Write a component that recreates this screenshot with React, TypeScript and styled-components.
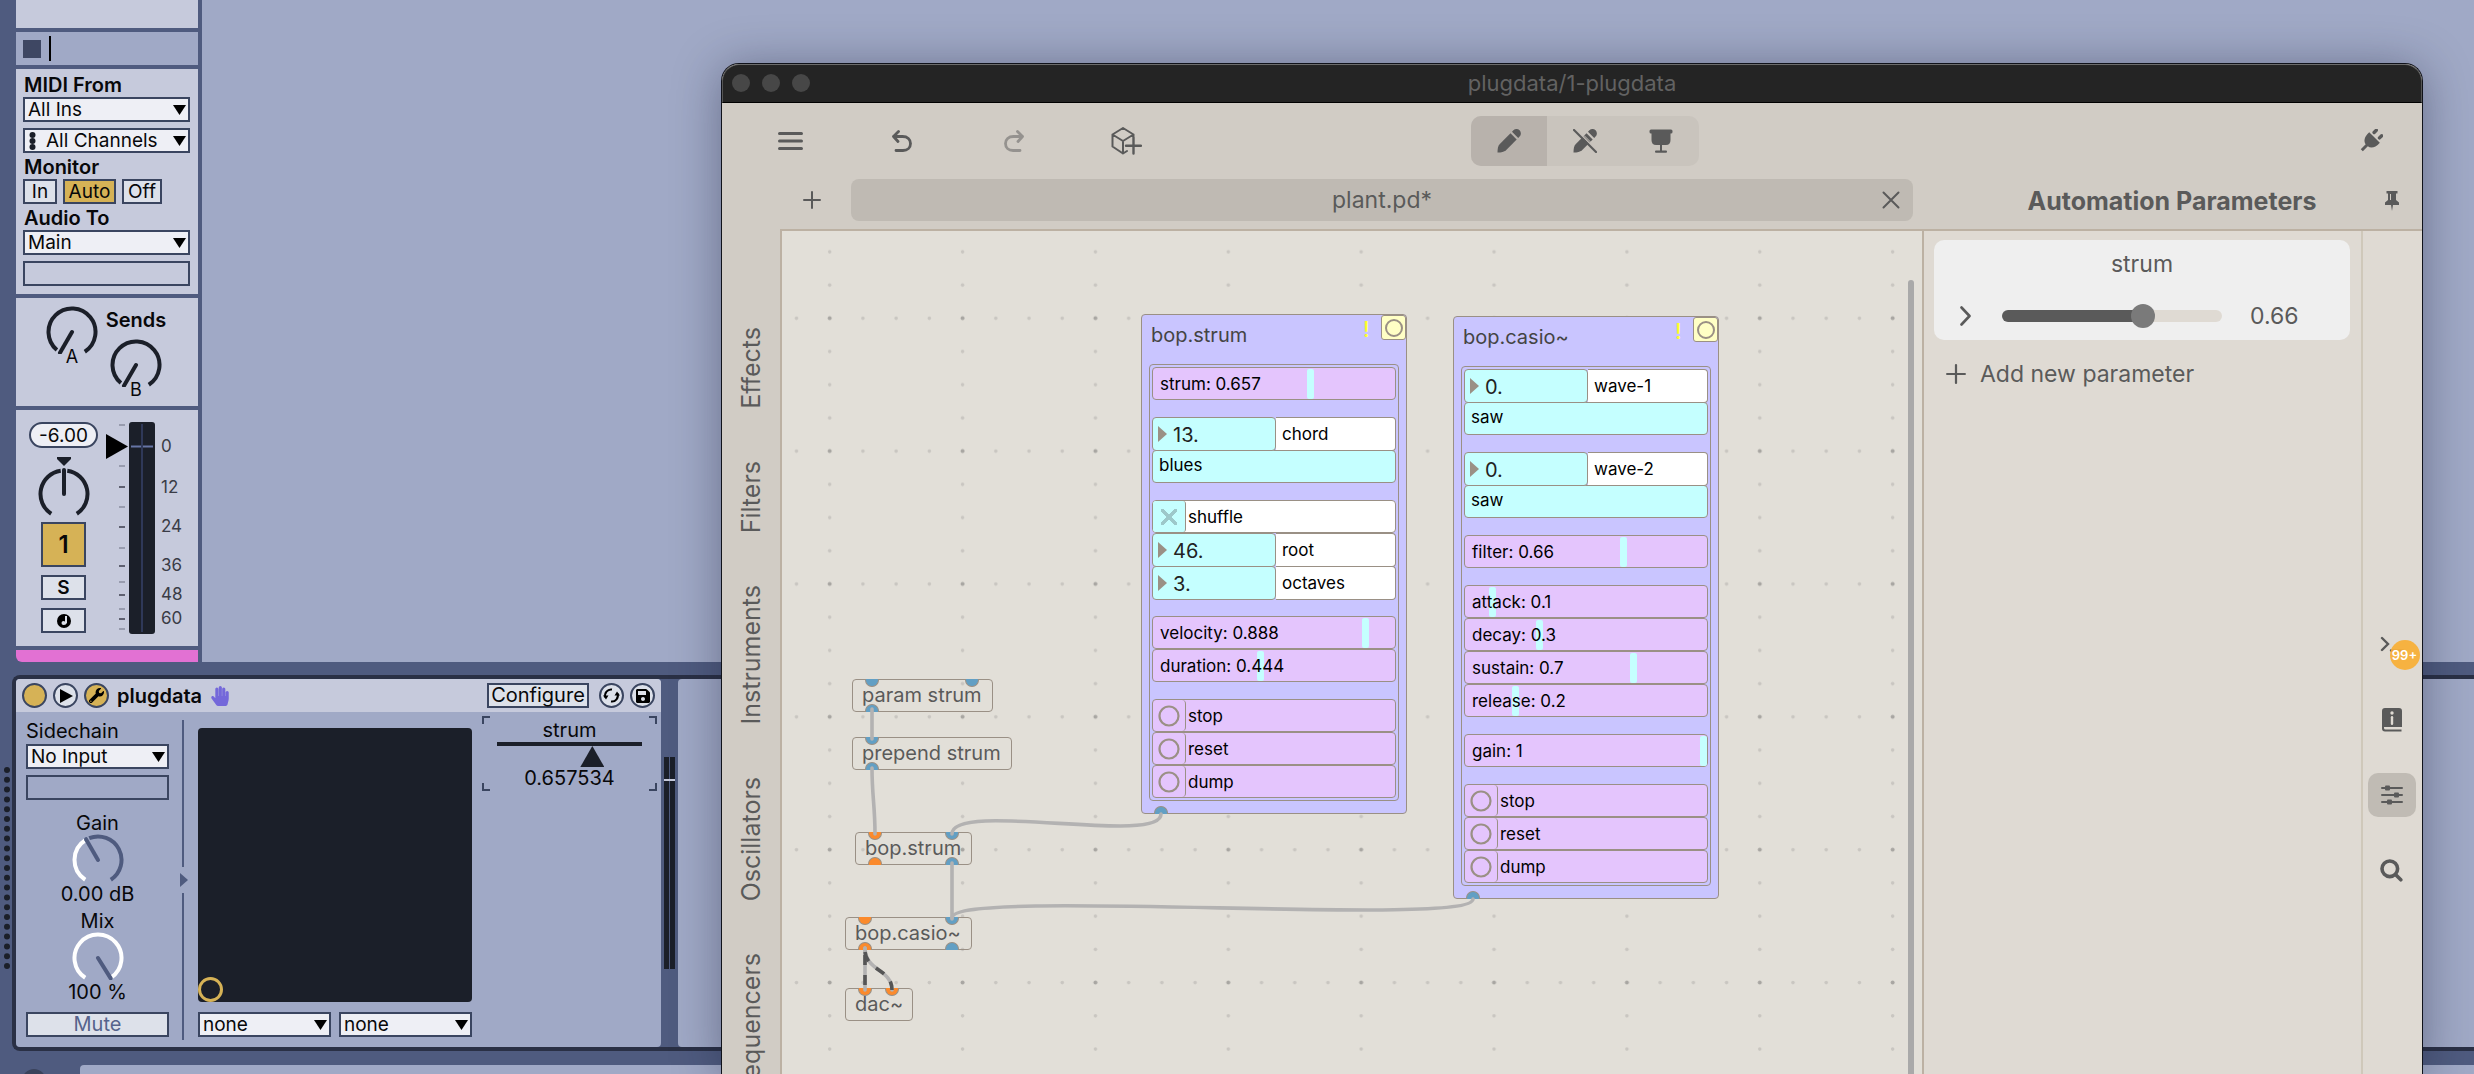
import React, { useId, useState } from "react";
import styled, { createGlobalStyle, css } from "styled-components";
import { FaHandPaper, FaSave, FaWrench } from "react-icons/fa";

const c = {
  frame: "#4f5b7f",
  lilac: "#a0a9c6",
  pale: "#c6cadc",
  field: "#eeeff5",
  control: "#dde1ea",
  line: "#3a4560",
  rackLine: "#2a3045",
  ink: "#1b1f29",
  gold: "#d6b256",
  pink: "#e271d3",
  bar: "#d1ccc5",
  panel: "#dfdad3",
  canvas: "#e2dfd8",
  rule: "#bcb1a3",
  text: "#5a5a5a",
  outline: "#9a9085",
  cyan: "#c5ffff",
  violet: "#e4c5fd",
  patch: "#c9c5ff",
};

const Global = createGlobalStyle`
  *, *::before, *::after { box-sizing: border-box; }
  body { margin: 0; font-family: Inter, "Liberation Sans", sans-serif; overflow: hidden; }
  button, input, select { font: inherit; color: inherit; margin: 0; padding: 0; border-radius: 0; }
  button { cursor: pointer; }
`;

const Page = styled.div`
  position: relative;
  display: flex;
  flex-direction: column;
  height: 100vh;
  overflow: hidden;
  background: ${c.frame};
  color: #08080a;
  font-size: 20px;
  line-height: 24px;
`;

/* ---------- shared Live controls ---------- */

const SelectWrap = styled.div`
  position: relative;
  display: flex;
  svg { position: absolute; right: 4px; top: 8px; pointer-events: none; }
`;
const SelectBox = styled.select<{ $indent?: boolean }>`
  appearance: none;
  width: 100%;
  height: 25px;
  padding: 0 20px 0 ${(p) => (p.$indent ? 21 : 3)}px;
  border: 2px solid ${c.line};
  background: ${c.field};
  font-size: 19px;
  line-height: 21px;
`;
const ChannelDots = styled.span`
  position: absolute;
  left: 6px;
  top: 4px;
  display: flex;
  svg { position: static; }
`;

function Select({ label, value, dots }: { label: string; value: string; dots?: boolean }) {
  return (
    <SelectWrap>
      <SelectBox aria-label={label} $indent={dots}>
        <option>{value}</option>
      </SelectBox>
      {dots && (
        <ChannelDots>
          <svg width="7" height="18" viewBox="0 0 7 18" fill={c.ink}>
            <circle cx="3.5" cy="3" r="3" />
            <circle cx="3.5" cy="9" r="3" />
            <circle cx="3.5" cy="15" r="3" />
          </svg>
        </ChannelDots>
      )}
      <svg width="13" height="10" viewBox="0 0 13 10">
        <path d="M0 0H13L6.5 10Z" />
      </svg>
    </SelectWrap>
  );
}

const EmptyBox = styled.div`
  height: 25px;
  margin-top: 6px;
  border: 2px solid ${c.line};
`;

const PushButton = styled.button<{ $w?: number; $on?: boolean; $h?: number; $bold?: boolean; $size?: number }>`
  display: flex;
  align-items: center;
  justify-content: center;
  width: ${(p) => (p.$w ? p.$w + "px" : "auto")};
  height: ${(p) => p.$h ?? 25}px;
  border: 2px solid ${c.line};
  background: ${(p) => (p.$on ? c.gold : c.control)};
  font-size: ${(p) => p.$size ?? 19}px;
  font-weight: ${(p) => (p.$bold ? 600 : 400)};
  line-height: 21px;
`;

function polar(cx: number, cy: number, r: number, deg: number) {
  const a = ((deg - 90) * Math.PI) / 180;
  return `${(cx + r * Math.cos(a)).toFixed(2)} ${(cy + r * Math.sin(a)).toFixed(2)}`;
}
function arc(from: number, to: number) {
  return `M${polar(26, 26, 23.5, from)}A23.5 23.5 0 ${to - from > 180 ? 1 : 0} 1 ${polar(26, 26, 23.5, to)}`;
}

function Knob({ angle, ring, filled, pointer }: { angle: number; ring: string; filled?: string; pointer: string }) {
  return (
    <svg width="52" height="48" viewBox="0 0 52 48" fill="none" strokeWidth="4">
      {angle < 145 && <path d={arc(Math.max(angle + 8, -140), 147)} stroke={ring} />}
      {angle > -147 && <path d={arc(-147, angle - (filled ? 2 : 8))} stroke={filled ?? ring} />}
      <path d={`M26 26L${polar(26, 26, 24, angle)}`} stroke={pointer} strokeLinecap="round" />
    </svg>
  );
}

/* ---------- session track ---------- */

const Session = styled.div`
  display: flex;
  flex: none;
  gap: 4px;
  padding-left: 16px;
`;
const Track = styled.div`
  display: flex;
  flex-direction: column;
  flex: none;
  gap: 4px;
  width: 182px;
`;
const Block = styled.section`
  background: ${c.pale};
`;
const EmptySlots = styled(Block)`
  height: 28px;
`;
const StopRow = styled.div`
  display: flex;
  align-items: center;
  gap: 8px;
  height: 33px;
  padding-left: 7px;
  background: ${c.lilac};
`;
const StopSquare = styled.button`
  width: 18px;
  height: 18px;
  border: 0;
  background: #3e4763;
`;
const Caret = styled.span`
  width: 2px;
  height: 25px;
  background: #000;
`;
const Routing = styled(Block)`
  padding: 2px 8px 8px 7px;
`;
const RoutingLabel = styled.div`
  height: 26px;
  padding-left: 1px;
  font-weight: 600;
  line-height: 28px;
`;
const Gap = styled.div`
  height: 6px;
`;
const Monitor = styled.div`
  display: flex;
  gap: 6px;
`;
const Arrangement = styled.div`
  flex: 1;
  background: ${c.lilac};
`;
const Sends = styled(Block)`
  display: flex;
  height: 108px;
  padding: 8px 0 0 30px;
`;
const SendKnob = styled.div`
  display: flex;
  flex-direction: column;
  align-items: center;
  width: 52px;
  font-size: 18px;
  line-height: 20px;
  svg { margin-bottom: -7px; }
`;
const SendB = styled.div`
  display: flex;
  flex-direction: column;
  align-items: center;
  width: 76px;
  font-weight: 600;
  ${SendKnob} { font-weight: 400; margin-top: 9px; }
`;
const SendTitle = styled.span`
  height: 24px;
  line-height: 28px;
`;
const Mixer = styled(Block)`
  display: flex;
  height: 236px;
  padding: 12px 0 0 13px;
`;
const Strip = styled.div`
  display: flex;
  flex-direction: column;
  align-items: center;
  width: 69px;
`;
const Volume = styled.input`
  width: 69px;
  height: 26px;
  border: 2px solid ${c.line};
  border-radius: 13px;
  background: ${c.field};
  font-size: 19px;
  text-align: center;
`;
const PanMark = styled.svg`
  margin: 9px 0 2px;
`;
const StripButtons = styled.div`
  display: flex;
  flex-direction: column;
  gap: 8px;
  margin-top: 6px;
`;
const TrackColor = styled.div`
  height: 12px;
  border-bottom-left-radius: 6px;
  background: ${c.pink};
`;

const ticks: [number, boolean][] = [
  [3, false], [44, false], [65, true], [85, false], [105, true], [126, false],
  [144, true], [160, false], [173, true], [187, false], [197, true], [207, false],
];
const scale: [number, string][] = [
  [24, "0"], [65, "12"], [104, "24"], [143, "36"], [172, "48"], [196, "60"],
];

const Meter = styled.svg`
  margin-left: 8px;
  font-size: 17px;
`;

function LevelMeter() {
  return (
    <Meter width="80" height="212" viewBox="0 0 80 212">
      {ticks.map(([y, strong]) => (
        <rect key={y} x="13" y={y - 1} width="6" height="2" fill={strong ? "#5e6070" : "#989cae"} />
      ))}
      <path d="M0 12L22 24.5L0 37Z" fill="#000" />
      <rect x="23" width="26" height="212" rx="3" fill={c.ink} />
      <path d="M36 2V210" stroke="#2f3858" strokeWidth="2" />
      <path d="M25 24.500H35M37 24.500H47" stroke="#6675a5" strokeWidth="2" />
      {scale.map(([y, t]) => (
        <text key={t} x="55" y={y + 6} fill="#3a3c46">{t}</text>
      ))}
    </Meter>
  );
}

function TrackColumn() {
  return (
    <Track>
      <EmptySlots />
      <StopRow>
        <StopSquare aria-label="Stop clips" />
        <Caret />
      </StopRow>
      <Routing>
        <RoutingLabel>MIDI From</RoutingLabel>
        <Select label="MIDI From" value="All Ins" />
        <Gap />
        <Select label="MIDI channel" value="All Channels" dots />
        <RoutingLabel>Monitor</RoutingLabel>
        <Monitor>
          <PushButton $w={34}>In</PushButton>
          <PushButton $w={53} $on>Auto</PushButton>
          <PushButton $w={40}>Off</PushButton>
        </Monitor>
        <RoutingLabel>Audio To</RoutingLabel>
        <Select label="Audio To" value="Main" />
        <EmptyBox />
      </Routing>
      <Sends>
        <SendKnob>
          <Knob angle={-150} ring={c.ink} pointer={c.ink} />
          A
        </SendKnob>
        <SendB>
          <SendTitle>Sends</SendTitle>
          <SendKnob>
            <Knob angle={-150} ring={c.ink} pointer={c.ink} />
            B
          </SendKnob>
        </SendB>
      </Sends>
      <Mixer>
        <Strip>
          <Volume aria-label="Track volume" defaultValue="-6.00" />
          <PanMark width="14" height="9" viewBox="0 0 14 9" fill={c.ink}>
            <path d="M0 0H14V2L7 9L0 2Z" />
          </PanMark>
          <Knob angle={0} ring={c.ink} pointer={c.ink} />
          <StripButtons>
            <PushButton $w={45} $h={45} $size={24} $on $bold>1</PushButton>
            <PushButton $w={45} $h={25} $bold>S</PushButton>
            <PushButton $w={45} $h={25} aria-label="Arm recording">
              <svg width="14" height="14" viewBox="0 0 14 14">
                <circle cx="7" cy="7" r="7" />
                <path d="M9 2V9.500M9 9.500H6.500" stroke={c.control} strokeWidth="2" fill="none" />
                <circle cx="6.500" cy="9" r="2" fill={c.control} />
              </svg>
            </PushButton>
          </StripButtons>
        </Strip>
        <LevelMeter />
      </Mixer>
      <TrackColor />
    </Track>
  );
}

/* ---------- device rack ---------- */

const RackRow = styled.div`
  display: flex;
  flex: none;
  margin-top: 13px;
`;
const Grip = styled.svg`
  flex: none;
  margin-top: 92px;
`;
const Rack = styled.div`
  display: flex;
  flex: 1;
  border: 4px solid ${c.rackLine};
  border-right: 0;
  border-radius: 8px 0 0 8px;
`;
const Device = styled.section`
  flex: none;
  width: 645px;
  height: 368px;
  border-radius: 4px;
  overflow: hidden;
  background: ${c.lilac};
`;
const DeviceHeader = styled.header`
  display: flex;
  align-items: center;
  gap: 6px;
  height: 33px;
  padding: 0 6px;
  background: ${c.pale};
  font-weight: 600;
`;
const RoundButton = styled.button<{ $on?: boolean }>`
  display: flex;
  align-items: center;
  justify-content: center;
  width: 25px;
  height: 25px;
  border: 2px solid ${c.line};
  border-radius: 50%;
  background: ${(p) => (p.$on ? c.gold : c.control)};
`;
const DeviceName = styled.span`
  display: flex;
  flex: 1;
  align-items: center;
  gap: 8px;
  padding-left: 2px;
`;
const HeaderRight = styled.div`
  display: flex;
  gap: 6px;
  ${PushButton} { margin-right: 4px; }
`;
const DeviceBody = styled.div`
  display: flex;
  padding-left: 10px;
`;
const SideControls = styled.div`
  width: 143px;
  padding-top: 7px;
`;
const SideLabel = styled.div`
  height: 25px;
`;
const KnobGroup = styled.div<{ $top: number }>`
  display: flex;
  flex-direction: column;
  align-items: center;
  margin-top: ${(p) => p.$top}px;
`;
const KnobLabel = styled.span`
  height: 22px;
  line-height: 22px;
`;
const MuteButton = styled(PushButton)`
  width: 100%;
  margin-top: 8px;
  color: #56638c;
`;
const Divider = styled.svg`
  flex: none;
  margin: 8px 8px 0 11px;
`;
const PadColumn = styled.div`
  width: 274px;
  padding-top: 16px;
`;
const XYPad = styled.div`
  display: flex;
  align-items: flex-end;
  height: 274px;
  border-radius: 4px;
  background: ${c.ink};
`;
const PadHandle = styled.button`
  width: 25px;
  height: 25px;
  border: 3px solid ${c.gold};
  border-radius: 50%;
  background: none;
`;
const PadSelects = styled.div`
  display: grid;
  grid-template-columns: 1fr 1fr;
  gap: 8px;
  margin-top: 10px;
`;
const Param = styled.label`
  position: relative;
  display: flex;
  flex-direction: column;
  align-items: center;
  width: 175px;
  height: 75px;
  margin: 4px 0 0 10px;
  padding-top: 2px;
`;
const Corners = styled.svg`
  position: absolute;
  inset: 0;
`;
const ParamTrack = styled.div`
  display: flex;
  justify-content: center;
  width: 145px;
  height: 24px;
  border-top: 4px solid ${c.ink};
`;
const ParamRange = styled.input`
  appearance: none;
  flex: none;
  width: 169px;
  height: 21px;
  background: none;
  &::-webkit-slider-thumb {
    appearance: none;
    width: 24px;
    height: 21px;
    background: ${c.ink};
    clip-path: polygon(50% 0, 100% 100%, 0 100%);
  }
`;
const RackMeters = styled.svg`
  flex: none;
  margin: 78px 3px 0;
`;
const NextDevice = styled.div`
  flex: 1;
  border-radius: 4px 0 0 4px;
  background: ${c.lilac};
`;
const Footer = styled.div`
  display: flex;
  flex: 1;
  gap: 34px;
  margin-top: 14px;
  padding-left: 22px;
`;
const FooterButton = styled.button`
  flex: none;
  width: 24px;
  height: 24px;
  margin-top: 4px;
  border: 0;
  border-radius: 50%;
  background: #3a435c;
`;
const FooterPanel = styled.div`
  flex: 1;
  border-top-left-radius: 4px;
  background: ${c.lilac};
`;

function DeviceRack() {
  return (
    <RackRow>
      <Grip width="12" height="204" viewBox="0 0 12 204" fill={c.ink}>
        {Array.from({ length: 21 }, (_, i) => (
          <circle key={i} cx="7" cy={3 + i * 9.8} r="3" />
        ))}
      </Grip>
      <Rack>
        <Device>
          <DeviceHeader>
            <RoundButton $on aria-label="Device on" />
            <RoundButton aria-label="Preview">
              <svg width="14" height="16" viewBox="0 0 14 16"><path d="M1 1L14 8L1 15Z" /></svg>
            </RoundButton>
            <RoundButton $on aria-label="Show plug-in window">
              <FaWrench size={15} color="#000" />
            </RoundButton>
            <DeviceName>
              plugdata
              <FaHandPaper size={20} color="#7468da" />
            </DeviceName>
            <HeaderRight>
              <PushButton $w={102} $size={20}>Configure</PushButton>
              <RoundButton aria-label="Hot-swap">
                <svg width="17" height="17" viewBox="0 0 17 17" fill="none" stroke="#000" strokeWidth="2">
                  <path d="M2.500 10.500A6 6 0 0 1 9 2.500M14.500 6.500A6 6 0 0 1 8 14.500" />
                  <path d="M0 8.500H5.500L3 12.500ZM17 8.500H11.500L14 4.500Z" fill="#000" stroke="none" />
                </svg>
              </RoundButton>
              <RoundButton aria-label="Save preset">
                <FaSave size={16} color="#000" />
              </RoundButton>
            </HeaderRight>
          </DeviceHeader>
          <DeviceBody>
            <SideControls>
              <SideLabel>Sidechain</SideLabel>
              <Select label="Sidechain" value="No Input" />
              <EmptyBox />
              <KnobGroup $top={12}>
                <KnobLabel>Gain</KnobLabel>
                <Knob angle={-30} ring={c.frame} filled="#fff" pointer={c.frame} />
                0.00 dB
              </KnobGroup>
              <KnobGroup $top={4}>
                <KnobLabel>Mix</KnobLabel>
                <Knob angle={148} ring={c.frame} filled="#fff" pointer={c.frame} />
                100 %
              </KnobGroup>
              <MuteButton $size={20}>Mute</MuteButton>
            </SideControls>
            <Divider width="10" height="320" viewBox="0 0 10 320" fill={c.frame}>
              <rect x="2" width="2" height="147" />
              <path d="M0 153L8 160L0 167Z" />
              <rect x="2" y="173" width="2" height="147" />
            </Divider>
            <PadColumn>
              <XYPad>
                <PadHandle aria-label="X-Y handle" />
              </XYPad>
              <PadSelects>
                <Select label="X axis" value="none" />
                <Select label="Y axis" value="none" />
              </PadSelects>
            </PadColumn>
            <Param>
              <Corners width="175" height="75" viewBox="0 0 175 75" fill="none" stroke={c.line} strokeWidth="2">
                <path d="M8 1H1V8M167 1H174V8M8 74H1V67M167 74H174V67" />
              </Corners>
              strum
              <ParamTrack>
                <ParamRange type="range" min="0" max="1" step="any" defaultValue="0.657534" />
              </ParamTrack>
              0.657534
            </Param>
          </DeviceBody>
        </Device>
        <RackMeters width="11" height="212" viewBox="0 0 11 212">
          <rect width="5" height="212" fill={c.ink} />
          <rect x="6" width="5" height="212" fill={c.ink} />
          <rect y="22" width="11" height="2" fill={c.pale} />
        </RackMeters>
        <NextDevice />
      </Rack>
    </RackRow>
  );
}

/* ---------- plugdata window ---------- */

const Window = styled.div`
  position: absolute;
  left: 721px;
  right: 51px;
  top: 63px;
  bottom: 0;
  display: flex;
  flex-direction: column;
  overflow: hidden;
  border: 1px solid #10121a;
  border-bottom: 0;
  border-radius: 18px 18px 0 0;
  background: ${c.bar};
  box-shadow: 0 4px 48px rgba(20, 26, 50, 0.4);
  color: ${c.text};
  font-size: 23px;
  line-height: 28px;
  button { border: 0; background: none; }
`;
const TitleBar = styled.header`
  display: grid;
  grid-template-columns: 1fr auto 1fr;
  align-items: center;
  flex: none;
  height: 39px;
  padding: 0 9px 2px;
  border: 1px solid;
  border-color: #6c6c6c #555 #000;
  border-radius: 17px 17px 0 0;
  background: #242424;
  color: #626262;
  font-size: 22px;
`;
const Lights = styled.div`
  display: flex;
  gap: 12px;
`;
const Light = styled.button`
  && {
    width: 18px;
    height: 18px;
    border-radius: 50%;
    background: #474747;
  }
`;
const Toolbar = styled.div`
  display: grid;
  grid-template-columns: 1fr auto 1fr;
  align-items: center;
  flex: none;
  height: 76px;
  padding-left: 26px;
`;
const ToolGroup = styled.div`
  display: flex;
  gap: 28px;
`;
const ToolButton = styled.button<{ $dim?: boolean }>`
  display: flex;
  align-items: center;
  justify-content: center;
  width: 84px;
  height: 48px;
  opacity: ${(p) => (p.$dim ? 0.5 : 1)};
`;
const Modes = styled.div`
  display: flex;
  overflow: hidden;
  border-radius: 10px;
  background: #c9c4bd;
`;
const ModeButton = styled.button<{ $on?: boolean }>`
  && {
    display: flex;
    align-items: center;
    justify-content: center;
    width: 76px;
    height: 50px;
    background: ${(p) => (p.$on ? "#b8b2ac" : "transparent")};
  }
`;
const PlugSlot = styled.div`
  display: flex;
  justify-content: flex-end;
  padding-right: 9px;
`;
const TabRow = styled.div`
  display: grid;
  grid-template-columns: 1fr 500px;
  flex: none;
  height: 50px;
`;
const Tabs = styled.div`
  display: flex;
  align-items: flex-start;
  gap: 14px;
  padding: 0 9px 0 65px;
`;
const AddTab = styled.button`
  display: flex;
  align-items: center;
  justify-content: center;
  width: 50px;
  height: 42px;
`;
const Tab = styled.div`
  display: grid;
  grid-template-columns: 44px 1fr 44px;
  align-items: center;
  flex: 1;
  height: 42px;
  border-radius: 8px;
  background: #bfbab3;
  text-align: center;
`;
const CloseTab = styled.button`
  display: flex;
  align-items: center;
  justify-content: center;
  height: 42px;
`;
const PanelTitle = styled.div`
  display: grid;
  grid-template-columns: 60px 1fr 60px;
  align-items: center;
  height: 44px;
  text-align: center;
`;
const PanelHeading = styled.h2`
  margin: 0;
  font-size: 25px;
  font-weight: 700;
`;
const Main = styled.div`
  display: flex;
  flex: 1;
  min-height: 0;
`;
const Palette = styled.nav`
  display: flex;
  flex-direction: column;
  align-items: center;
  flex: none;
  gap: 52px;
  width: 58px;
  padding: 98px 0 0;
`;
const PaletteItem = styled.button`
  writing-mode: vertical-rl;
  transform: rotate(180deg);
  font-size: 25px;
  line-height: 28px;
`;
const CanvasArea = styled.main`
  position: relative;
  flex: 1;
  overflow: hidden;
  border-top: 2px solid ${c.rule};
  border-left: 2px solid ${c.rule};
  background: ${c.canvas};
`;
const Layer = styled.svg`
  position: absolute;
  inset: 0;
  width: 100%;
  height: 100%;
  pointer-events: none;
`;
const Scrollbar = styled.div`
  position: absolute;
  right: 8px;
  top: 49px;
  bottom: 0;
  width: 6px;
  border-radius: 3px 3px 0 0;
  background: #a9a9a9;
`;
const ObjectBox = styled.div<{ $x: number; $y: number; $w: number }>`
  position: absolute;
  left: ${(p) => p.$x}px;
  top: ${(p) => p.$y}px;
  width: ${(p) => p.$w}px;
  height: 33px;
  padding-left: 9px;
  border: 1px solid ${c.outline};
  border-radius: 4px;
  font-size: 20px;
  line-height: 31px;
  white-space: nowrap;
`;
const Port = styled.i<{ $x: number; $out?: boolean; $signal?: boolean }>`
  position: absolute;
  left: ${(p) => p.$x - 8}px;
  ${(p) => (p.$out ? "bottom" : "top")}: -1px;
  width: 14px;
  height: 8px;
  border: 1px solid ${c.outline};
  ${(p) =>
    p.$out
      ? css`border-bottom: 0; border-radius: 7px 7px 0 0;`
      : css`border-top: 0; border-radius: 0 0 7px 7px;`}
  background: ${(p) => (p.$signal ? "#fb8a2c" : "#629fc4")};
`;

const Patch = styled.section<{ $x: number; $y: number }>`
  position: absolute;
  left: ${(p) => p.$x}px;
  top: ${(p) => p.$y}px;
  width: 266px;
  padding: 0 7px 12px;
  border: 1px solid ${c.outline};
  border-radius: 4px;
  background: ${c.patch};
  color: #000;
  font-size: 17px;
  line-height: 20px;
`;
const PatchHead = styled.header`
  display: flex;
  height: 49px;
  margin-right: -7px;
  padding-left: 2px;
  color: #444;
  font-size: 20px;
`;
const PatchTitle = styled.span`
  flex: 1;
  padding-top: 10px;
`;
const Warn = styled.span`
  width: 18px;
  padding-top: 4px;
  color: #ffff2e;
  font-size: 22px;
  font-weight: 500;
`;
const HelpBang = styled.button`
  && {
    display: flex;
    align-items: center;
    justify-content: center;
    width: 25px;
    height: 25px;
    border: 1px solid ${c.outline};
    border-radius: 3px;
    background: #ffffc5;
  }
`;
const Frame = styled.div`
  display: flex;
  flex-direction: column;
  gap: 17px;
  padding: 2px;
  border: 1px solid ${c.outline};
  border-radius: 4px;
`;
const rowBase = css`
  height: 33px;
  border: 1px solid ${c.outline};
  border-radius: 4px;
`;
const SliderRow = styled.label`
  ${rowBase}
  display: grid;
  align-items: center;
  background: ${c.violet};
`;
const SliderText = styled.span`
  grid-area: 1 / 1;
  z-index: 1;
  padding-left: 7px;
  pointer-events: none;
`;
const SliderInput = styled.input`
  grid-area: 1 / 1;
  appearance: none;
  width: 100%;
  height: 31px;
  background: none;
  &::-webkit-slider-thumb {
    appearance: none;
    width: 7px;
    height: 30px;
    border-radius: 2px;
    background: ${c.cyan};
  }
`;
const NumberRow = styled.label`
  display: grid;
  grid-template-columns: 124px 1fr;
  height: 33px;
`;
const NumberCell = styled.span`
  display: flex;
  align-items: center;
  gap: 6px;
  min-width: 0;
  padding-left: 5px;
  border: 1px solid ${c.outline};
  border-radius: 4px;
  background: ${c.cyan};
`;
const NumberInput = styled.input`
  width: 90px;
  height: 31px;
  padding-top: 1px;
  border: 0;
  background: none;
  color: #222;
  font-size: 20px;
`;
const NameCell = styled.span`
  padding-left: 6px;
  border: 1px solid ${c.outline};
  border-left: 0;
  border-radius: 0 4px 4px 0;
  background: #fff;
  line-height: 32px;
`;
const ValueRow = styled.output`
  ${rowBase}
  display: block;
  padding-left: 6px;
  background: ${c.cyan};
  line-height: 29px;
`;
const PushRow = styled.label<{ $bg: string }>`
  ${rowBase}
  display: flex;
  align-items: center;
  gap: 2px;
  background: ${(p) => p.$bg};
`;
const BangButton = styled.button`
  && {
    display: flex;
    align-items: center;
    justify-content: center;
    width: 33px;
    height: 31px;
    border-right: 1px solid ${c.outline};
    border-radius: 0 4px 4px 0;
  }
`;
const ToggleInput = styled.input`
  appearance: none;
  width: 33px;
  height: 31px;
  border-right: 1px solid ${c.outline};
  border-radius: 3px;
  background:
    linear-gradient(45deg, transparent 43%, #9dc8ca 43%, #9dc8ca 57%, transparent 57%) center / 16px 16px no-repeat,
    linear-gradient(-45deg, transparent 43%, #9dc8ca 43%, #9dc8ca 57%, transparent 57%) center / 16px 16px no-repeat,
    ${c.cyan};
`;
const Stack = styled.div``;

function ParamSlider({ name, value }: { name: string; value: number }) {
  const [v, setV] = useState(value);
  return (
    <SliderRow>
      <SliderText>{`${name}: ${v}`}</SliderText>
      <SliderInput type="range" min="0" max="1" step="0.001" value={v} onChange={(e) => setV(Number(e.target.value))} />
    </SliderRow>
  );
}
function NumberBox({ name, value }: { name: string; value: string }) {
  return (
    <NumberRow>
      <NumberCell>
        <svg width="9" height="16" viewBox="0 0 9 16" fill={c.outline}><path d="M0 0L9 8L0 16Z" /></svg>
        <NumberInput defaultValue={value} />
      </NumberCell>
      <NameCell>{name}</NameCell>
    </NumberRow>
  );
}
function Bang({ name }: { name: string }) {
  const id = useId();
  return (
    <PushRow $bg={c.violet} htmlFor={id}>
      <BangButton id={id}>
        <svg width="22" height="22" viewBox="0 0 22 22" fill="none" stroke={c.outline} strokeWidth="2.200">
          <circle cx="11" cy="11" r="9.500" />
        </svg>
      </BangButton>
      {name}
    </PushRow>
  );
}
function Bangs() {
  return (
    <Stack>
      <Bang name="stop" />
      <Bang name="reset" />
      <Bang name="dump" />
    </Stack>
  );
}
function PatchModule({ title, x, y, children }: { title: string; x: number; y: number; children: React.ReactNode }) {
  return (
    <Patch $x={x} $y={y}>
      <PatchHead>
        <PatchTitle>{title}</PatchTitle>
        <Warn>!</Warn>
        <HelpBang aria-label={`${title} help`}>
          <svg width="18" height="18" viewBox="0 0 18 18" fill="none" stroke={c.outline} strokeWidth="2">
            <circle cx="9" cy="9" r="8" />
          </svg>
        </HelpBang>
      </PatchHead>
      <Frame>{children}</Frame>
      <Port $x={20} $out />
    </Patch>
  );
}

type PortSpec = [number, boolean];
const objects: { text: string; x: number; y: number; w: number; ins: PortSpec[]; outs: PortSpec[] }[] = [
  { text: "param strum", x: 70, y: 448, w: 141, ins: [[20, false], [120, false]], outs: [[20, false]] },
  { text: "prepend strum", x: 70, y: 506, w: 160, ins: [[20, false]], outs: [[20, false]] },
  { text: "bop.strum", x: 73, y: 601, w: 117, ins: [[20, true], [97, false]], outs: [[20, true], [97, false]] },
  { text: "bop.casio~", x: 63, y: 686, w: 127, ins: [[20, true], [107, false]], outs: [[20, true], [107, false]] },
  { text: "dac~", x: 63, y: 757, w: 68, ins: [[20, true], [47, true]], outs: [] },
];

function GridDots() {
  return (
    <Layer>
      <defs>
        <pattern id="dots" x="31.1" y="70.7" width="132.87" height="132.87" patternUnits="userSpaceOnUse">
          {[1, 2, 3].map((k) => (
            <g key={k} fill="#c9c6c1">
              <circle cx={16.6 + 33.22 * k} cy="16.6" r="1.8" />
              <circle cx="16.6" cy={16.6 + 33.22 * k} r="1.8" />
            </g>
          ))}
          <circle cx="16.6" cy="16.6" r="2" fill="#a8a6a2" />
        </pattern>
      </defs>
      <rect width="100%" height="100%" fill="url(#dots)" />
    </Layer>
  );
}

function Cables() {
  return (
    <Layer fill="none" stroke="#b3b2b2" strokeWidth="3.600" strokeLinecap="round">
      <path d="M90 478V508" />
      <path d="M90 537C90 565 93 575 93 603" />
      <path d="M170 632V688" />
      <path d="M379 583C379 615 170 569 170 603" />
      <path d="M691 668C691 697 170 656 170 687" />
      <path d="M83 717V759" />
      <path d="M83 717C83 740 110 738 110 759" />
      <g stroke="#555" strokeLinecap="butt" strokeDasharray="10 10">
        <path d="M83 724V757" />
        <path d="M83 721C85 740 110 738 110 759" />
      </g>
    </Layer>
  );
}

function PatchCanvas() {
  return (
    <CanvasArea>
      <GridDots />
      {objects.map((o) => (
        <ObjectBox key={o.text} $x={o.x} $y={o.y} $w={o.w}>
          {o.text}
          {o.ins.map(([x, s]) => <Port key={`i${x}`} $x={x} $signal={s} />)}
          {o.outs.map(([x, s]) => <Port key={`o${x}`} $x={x} $signal={s} $out />)}
        </ObjectBox>
      ))}
      <PatchModule title="bop.strum" x={359} y={83}>
        <ParamSlider name="strum" value={0.657} />
        <Stack>
          <NumberBox name="chord" value="13." />
          <ValueRow>blues</ValueRow>
        </Stack>
        <Stack>
          <PushRow $bg="#fff">
            <ToggleInput type="checkbox" />
            shuffle
          </PushRow>
          <NumberBox name="root" value="46." />
          <NumberBox name="octaves" value="3." />
        </Stack>
        <Stack>
          <ParamSlider name="velocity" value={0.888} />
          <ParamSlider name="duration" value={0.444} />
        </Stack>
        <Bangs />
      </PatchModule>
      <PatchModule title="bop.casio~" x={671} y={85}>
        <Stack>
          <NumberBox name="wave-1" value="0." />
          <ValueRow>saw</ValueRow>
        </Stack>
        <Stack>
          <NumberBox name="wave-2" value="0." />
          <ValueRow>saw</ValueRow>
        </Stack>
        <ParamSlider name="filter" value={0.66} />
        <Stack>
          <ParamSlider name="attack" value={0.1} />
          <ParamSlider name="decay" value={0.3} />
          <ParamSlider name="sustain" value={0.7} />
          <ParamSlider name="release" value={0.2} />
        </Stack>
        <ParamSlider name="gain" value={1} />
        <Bangs />
      </PatchModule>
      <Cables />
      <Scrollbar />
    </CanvasArea>
  );
}

const Sidebar = styled.aside`
  display: flex;
  flex: none;
  width: 500px;
  border-top: 2px solid ${c.rule};
  border-left: 2px solid ${c.rule};
  background: ${c.panel};
`;
const Parameters = styled.div`
  flex: 1;
  padding: 9px 11px 0 10px;
`;
const Card = styled.div`
  height: 100px;
  border-radius: 10px;
  background: #efefef;
`;
const CardTitle = styled.div`
  padding-top: 10px;
  text-align: center;
`;
const CardRow = styled.div`
  display: grid;
  grid-template-columns: 68px 1fr 128px;
  align-items: center;
  margin-top: 24px;
`;
const Expand = styled.button`
  display: flex;
  padding-left: 26px;
`;
const ValueText = styled.span`
  padding-left: 28px;
`;
const AutoRange = styled.input<{ $v: number }>`
  appearance: none;
  width: 100%;
  height: 12px;
  border-radius: 6px;
  background: linear-gradient(to right, ${c.text} ${(p) => p.$v * 100}%, ${c.panel} 0);
  &::-webkit-slider-thumb {
    appearance: none;
    width: 24px;
    height: 24px;
    border-radius: 50%;
    background: #7a7a7a;
  }
`;
const AddParameter = styled.button`
  display: flex;
  align-items: center;
  gap: 14px;
  margin-top: 20px;
  padding-left: 12px;
`;
const Rail = styled.nav`
  display: flex;
  flex-direction: column;
  align-items: center;
  gap: 31px;
  width: 61px;
  padding: 392px 2px 0 0;
  border-left: 2px solid #cfc8ba;
`;
const RailButton = styled.button<{ $on?: boolean }>`
  && {
    position: relative;
    display: flex;
    align-items: center;
    justify-content: center;
    width: 48px;
    height: 44px;
    border-radius: 10px;
    background: ${(p) => (p.$on ? "#c0bbb4" : "none")};
  }
`;
const Badge = styled.span`
  position: absolute;
  left: 22px;
  top: 17px;
  width: 30px;
  height: 30px;
  border-radius: 50%;
  background: rgba(248, 174, 54, 0.93);
  color: #fff;
  font-size: 13px;
  font-weight: 600;
  line-height: 30px;
  text-align: center;
`;

function Plus({ size }: { size: number }) {
  return (
    <svg width={size} height={size} viewBox="0 0 18 18" stroke={c.text} strokeWidth="2" strokeLinecap="round">
      <path d="M9 1V17M1 9H17" />
    </svg>
  );
}

const penBody = "M0.5 23.5C0.500 19.500 1 17 2.800 15L13.500 4.200L19.700 10.400L9 21.200C7 23 4.500 23.500 0.500 23.500Z";
const penCap = "M15 2.700L16.400 1.300A4.300 4.300 0 0 1 22.600 7.500L21.200 8.900Z";

function PlugdataWindow() {
  const [amount, setAmount] = useState(0.66);
  return (
    <Window>
      <TitleBar>
        <Lights>
          <Light aria-label="Close" />
          <Light aria-label="Minimise" />
          <Light aria-label="Zoom" />
        </Lights>
        plugdata/1-plugdata
      </TitleBar>
      <Toolbar>
        <ToolGroup>
          <ToolButton aria-label="Menu">
            <svg width="25" height="20" viewBox="0 0 25 20" stroke={c.text} strokeWidth="3" strokeLinecap="round">
              <path d="M1.500 2.500H23.500M1.500 10H23.500M1.500 17.500H23.500" />
            </svg>
          </ToolButton>
          <ToolButton aria-label="Undo">
            <svg width="20" height="22" viewBox="0 0 20 22" fill="none" stroke={c.text} strokeWidth="2.800" strokeLinecap="round" strokeLinejoin="round">
              <path d="M6.500 1.500L1.500 6.500L6 11.500M1.500 6.500H10.500C15.500 6.500 18.500 9.500 18.500 13.500S15.500 20.500 11 20.500H4" />
            </svg>
          </ToolButton>
          <ToolButton aria-label="Redo" $dim>
            <svg width="20" height="22" viewBox="0 0 20 22" fill="none" stroke={c.text} strokeWidth="2.800" strokeLinecap="round" strokeLinejoin="round">
              <path d="M13.500 1.500L18.500 6.500L14 11.500M18.500 6.500H9.500C4.500 6.500 1.500 9.500 1.500 13.500S4.500 20.500 9 20.500H16" />
            </svg>
          </ToolButton>
          <ToolButton aria-label="Add object">
            <svg width="31" height="28" viewBox="0 0 31 28" fill="none" stroke={c.text} strokeWidth="2" strokeLinecap="round" strokeLinejoin="round">
              <path d="M12 1L22.500 7.500L12 14L1.500 7.500ZM1.500 7.500V19.500L12 26.500V14M22.500 7.500V10M12 26.500L16 24" />
              <path d="M22.500 11V26.500M15 18.700H30" strokeWidth="2.400" />
            </svg>
          </ToolButton>
        </ToolGroup>
        <Modes>
          <ModeButton $on aria-label="Edit mode">
            <svg width="24" height="24" viewBox="0 0 24 24" fill={c.text}>
              <path d={penBody} />
              <path d={penCap} />
            </svg>
          </ModeButton>
          <ModeButton aria-label="Run mode">
            <svg width="24" height="24" viewBox="0 0 24 24" fill={c.text}>
              <path d={penBody} />
              <path d={penCap} />
              <path d="M11 6.500L17.500 13" stroke="#c9c4bd" strokeWidth="1" />
              <path d="M2.200 0L24 21.800" stroke="#c9c4bd" strokeWidth="1.500" />
              <path d="M1 1L23 23" stroke={c.text} strokeWidth="2.200" strokeLinecap="round" />
            </svg>
          </ModeButton>
          <ModeButton aria-label="Presentation mode">
            <svg width="24" height="24" viewBox="0 0 24 24" fill={c.text}>
              <rect x="0.500" y="0.500" width="23" height="4" rx="1.500" />
              <path d="M2.500 4H21.500V11C21.500 14 20 16 17 16H7C4 16 2.500 14 2.500 11Z" />
              <rect x="11" y="15" width="2" height="8" />
              <rect x="6" y="21.500" width="12" height="2.200" rx="1" />
            </svg>
          </ModeButton>
        </Modes>
        <PlugSlot>
          <ToolButton aria-label="Audio settings">
            <svg width="24" height="24" viewBox="0 0 24 24" fill={c.text}>
              <g transform="rotate(45 12 12)">
                <rect x="6.500" y="-1" width="3.400" height="6.500" rx="1.700" />
                <rect x="14.100" y="-1" width="3.400" height="6.500" rx="1.700" />
                <path d="M4.500 7H19.500C20 14 17 17.500 13.500 18V25H10.500V18C7 17.500 4 14 4.500 7Z" />
              </g>
            </svg>
          </ToolButton>
        </PlugSlot>
      </Toolbar>
      <TabRow>
        <Tabs>
          <AddTab aria-label="New tab"><Plus size={18} /></AddTab>
          <Tab>
            <span />
            plant.pd*
            <CloseTab aria-label="Close tab">
              <svg width="18" height="18" viewBox="0 0 18 18" stroke={c.text} strokeWidth="2" strokeLinecap="round">
                <path d="M1.500 1.500L16.500 16.500M16.500 1.500L1.500 16.500" />
              </svg>
            </CloseTab>
          </Tab>
        </Tabs>
        <PanelTitle>
          <span />
          <PanelHeading>Automation Parameters</PanelHeading>
          <CloseTab aria-label="Pin panel">
            <svg width="14" height="20" viewBox="0 0 14 20" fill={c.text}>
              <path d="M1.500 0H12.500V2.500H11V9L14 11.500V14H8L7 20L6 14H0V11.500L3 9V2.500H1.500Z" />
              <path d="M5.500 3V9" stroke={c.bar} />
            </svg>
          </CloseTab>
        </PanelTitle>
      </TabRow>
      <Main>
        <Palette>
          {["Effects", "Filters", "Instruments", "Oscillators", "Sequencers"].map((t) => (
            <PaletteItem key={t}>{t}</PaletteItem>
          ))}
        </Palette>
        <PatchCanvas />
        <Sidebar>
          <Parameters>
            <Card>
              <CardTitle>strum</CardTitle>
              <CardRow>
                <Expand aria-label="Expand strum">
                  <svg width="11" height="20" viewBox="0 0 11 20" fill="none" stroke={c.text} strokeWidth="2.600" strokeLinecap="round" strokeLinejoin="round">
                    <path d="M1.500 1.500L9.500 10L1.500 18.500" />
                  </svg>
                </Expand>
                <AutoRange
                  aria-label="strum value"
                  type="range"
                  min="0"
                  max="1"
                  step="0.01"
                  value={amount}
                  $v={amount}
                  onChange={(e) => setAmount(Number(e.target.value))}
                />
                <ValueText>{amount.toFixed(2)}</ValueText>
              </CardRow>
            </Card>
            <AddParameter>
              <Plus size={20} />
              Add new parameter
            </AddParameter>
          </Parameters>
          <Rail>
            <RailButton aria-label="Console">
              <svg width="24" height="18" viewBox="0 0 24 18" fill="none" stroke={c.text} strokeWidth="2.400" strokeLinecap="round">
                <path d="M2 2L8 8L2 14M11 14.500H23" />
              </svg>
              <Badge>99+</Badge>
            </RailButton>
            <RailButton aria-label="Documentation">
              <svg width="20" height="24" viewBox="0 0 20 24" fill={c.text}>
                <path d="M3 0H17A3 3 0 0 1 20 3V19H2V20A1.500 1.500 0 0 0 3.500 21.500H19.500V23.500H3A3 3 0 0 1 0 20.500V3A3 3 0 0 1 3 0Z" />
                <circle cx="10" cy="5" r="1.700" fill={c.panel} />
                <rect x="8.800" y="8" width="2.400" height="9" rx="1.200" fill={c.panel} />
              </svg>
            </RailButton>
            <RailButton $on aria-label="Automation">
              <svg width="22" height="20" viewBox="0 0 22 20" fill={c.text}>
                <path d="M1 3H21M1 10H21M1 17H21" stroke={c.text} strokeWidth="2" strokeLinecap="round" />
                <rect x="4" y="0.500" width="5" height="5" rx="1" />
                <rect x="13" y="7.500" width="5" height="5" rx="1" />
                <rect x="6" y="14.500" width="5" height="5" rx="1" />
              </svg>
            </RailButton>
            <RailButton aria-label="Search">
              <svg width="23" height="23" viewBox="0 0 23 23" fill="none" stroke={c.text} strokeWidth="3.600" strokeLinecap="round">
                <circle cx="9.800" cy="9.800" r="7.800" />
                <path d="M16 16L20.800 20.800" />
              </svg>
            </RailButton>
          </Rail>
        </Sidebar>
      </Main>
    </Window>
  );
}

export default function App() {
  return (
    <Page>
      <Global />
      <Session>
        <TrackColumn />
        <Arrangement />
      </Session>
      <DeviceRack />
      <Footer>
        <FooterButton aria-label="Show info" />
        <FooterPanel />
      </Footer>
      <PlugdataWindow />
    </Page>
  );
}
